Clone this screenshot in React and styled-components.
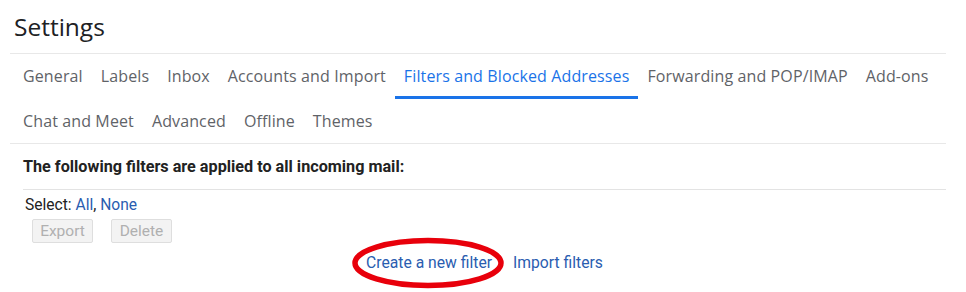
import React from 'react';
import styled, { createGlobalStyle } from 'styled-components';

const GlobalStyle = createGlobalStyle`
  body {
    margin: 0;
    background: #fff;
    font-family: Roboto, "Liberation Sans", sans-serif;
  }
`;

const tabRows = [
  ['General', 'Labels', 'Inbox', 'Accounts and Import', 'Filters and Blocked Addresses', 'Forwarding and POP/IMAP', 'Add-ons'],
  ['Chat and Meet', 'Advanced', 'Offline', 'Themes']
];

export default function App() {
  return (
    <Page>
      <GlobalStyle />
      <Title>Settings</Title>
      <Panel>
        <TabBar>
          {tabRows.map((row, i) => (
            <TabRow key={i}>
              {row.map(name => (
                <Tab key={name} active={name === 'Filters and Blocked Addresses'}>
                  {name}
                </Tab>
              ))}
            </TabRow>
          ))}
        </TabBar>
        <Section>
          <Heading>The following filters are applied to all incoming mail:</Heading>
          <SelectLine>
            Select: <Link>All</Link>, <Link>None</Link>
          </SelectLine>
          <Buttons>
            <GrayButton>Export</GrayButton>
            <GrayButton>Delete</GrayButton>
          </Buttons>
          <Actions>
            <Circled>
              <Link>Create a new filter</Link>
              <Ring viewBox="0 0 154 52" aria-hidden="true">
                <ellipse cx="77" cy="26" rx="73" ry="22.5" fill="none" stroke="#e8000b" strokeWidth="5.5" />
              </Ring>
            </Circled>
            <Link>Import filters</Link>
          </Actions>
        </Section>
      </Panel>
    </Page>
  );
}

const Page = styled.div`
  width: 966px;
  height: 292px;
  overflow: hidden;
`;

const Title = styled.h1`
  margin: 0;
  height: 53px;
  padding: 12px 0 0 14px;
  box-sizing: border-box;
  font-family: 'Open Sans', sans-serif;
  font-weight: 400;
  font-size: 24.5px;
  line-height: 30px;
  color: #202124;
`;

const Panel = styled.div`
  margin-left: 10px;
  width: 936px;
  border-top: 1px solid #e8e8e8;
`;

const TabBar = styled.nav`
  padding-left: 4px;
  border-bottom: 1px solid #e8e8e8;
`;

const TabRow = styled.div`
  display: flex;
  height: 45px;
  &:last-child {
    height: 44px;
  }
`;

const Tab = styled.div`
  display: flex;
  align-items: center;
  padding: 3px 9px 1px;
  box-sizing: border-box;
  font-family: 'Open Sans', sans-serif;
  font-size: 16px;
  letter-spacing: 0.12px;
  color: ${props => (props.active ? '#1a73e8' : '#5f6368')};
  border-bottom: 3px solid ${props => (props.active ? '#1a73e8' : 'transparent')};
  white-space: nowrap;
`;

const Section = styled.div`
  margin-left: 13px;
`;

const Heading = styled.div`
  height: 45px;
  display: flex;
  align-items: center;
  font-weight: 700;
  font-size: 16.2px;
  color: #222;
  border-bottom: 1px solid #e3e3e3;
`;

const SelectLine = styled.div`
  margin: 6px 0 0 2px;
  font-size: 15.6px;
  line-height: 18px;
  color: #222;
`;

const Link = styled.span`
  color: #2a5db0;
  cursor: pointer;
`;

const Buttons = styled.div`
  display: flex;
  gap: 18px;
  margin: 5px 0 0 9px;
`;

const GrayButton = styled.button`
  width: 61px;
  height: 24px;
  padding: 0;
  font-family: Roboto, sans-serif;
  font-size: 15.5px;
  color: #b0b0b0;
  background: #f3f3f3;
  border: 1px solid #dedede;
  border-radius: 2px;
`;

const Actions = styled.div`
  display: flex;
  justify-content: center;
  gap: 21px;
  margin-top: 11px;
  font-size: 15.7px;
  line-height: 18px;
`;

const Circled = styled.span`
  position: relative;
`;

const Ring = styled.svg`
  position: absolute;
  left: -15px;
  top: -17px;
  width: 154px;
  height: 52px;
  overflow: visible;
`;
